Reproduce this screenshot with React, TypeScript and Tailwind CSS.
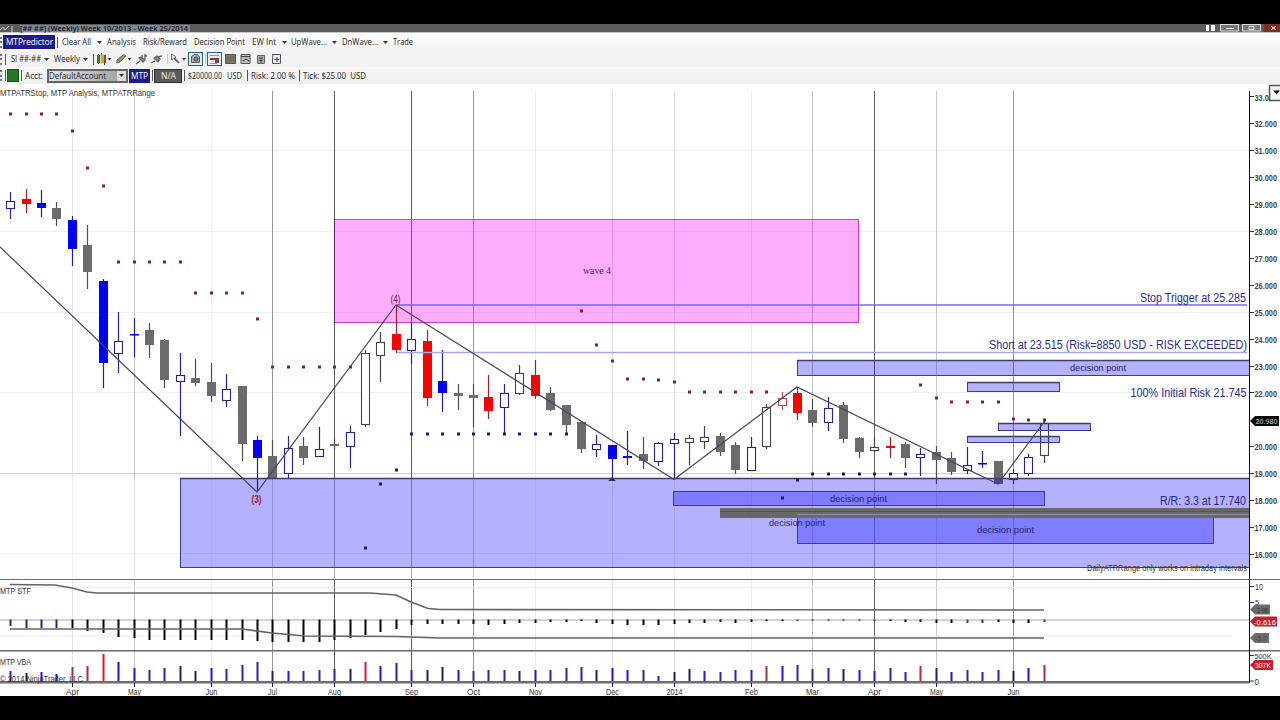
import { ReactNode } from "react";
import clsx from "clsx";

type Kind = "b" | "hb" | "g" | "hk" | "r" | "hr";
// high, body top, body bottom, low, kind
type Candle = [number, number, number, number, Kind];

const STEP = 15.43;
const barX = (i: number) => Math.floor(10.6 + i * STEP) + 0.5;

const candles: Candle[] = [
  [192, 201, 208, 219, "hb"],
  [189, 199, 204, 213, "r"],
  [190, 203, 208, 217, "b"],
  [202, 208, 219, 226, "g"],
  [216, 220, 249, 266, "b"],
  [225, 245, 272, 289, "g"],
  [279, 281, 363, 388, "b"],
  [312, 341, 353, 373, "hb"],
  [318, 334, 335, 357, "b"],
  [323, 330, 345, 358, "g"],
  [339, 340, 380, 388, "g"],
  [353, 375, 381, 436, "hb"],
  [359, 378, 383, 386, "g"],
  [363, 382, 396, 402, "g"],
  [374, 389, 400, 407, "hb"],
  [386, 386, 444, 461, "g"],
  [436, 440, 458, 491, "b"],
  [440, 456, 478, 478, "g"],
  [436, 448, 473, 479, "hb"],
  [437, 446, 458, 465, "g"],
  [427, 449, 456, 456, "hb"],
  [437, 444, 446, 450, "g"],
  [426, 432, 446, 468, "hb"],
  [350, 353, 424, 427, "hk"],
  [332, 342, 355, 382, "hk"],
  [305, 334, 350, 353, "r"],
  [322, 339, 350, 364, "hb"],
  [330, 341, 398, 406, "r"],
  [350, 381, 393, 412, "b"],
  [384, 393, 396, 410, "g"],
  [384, 395, 398, 427, "g"],
  [375, 397, 411, 419, "r"],
  [384, 393, 407, 433, "hb"],
  [365, 373, 393, 395, "hk"],
  [360, 375, 396, 399, "r"],
  [387, 393, 410, 411, "g"],
  [405, 405, 425, 433, "g"],
  [421, 422, 449, 453, "g"],
  [435, 444, 449, 457, "hb"],
  [445, 445, 459, 480, "b"],
  [431, 456, 458, 465, "b"],
  [437, 454, 461, 469, "g"],
  [442, 443, 461, 466, "hb"],
  [433, 439, 443, 479, "hb"],
  [435, 438, 442, 465, "hk"],
  [426, 437, 441, 449, "hk"],
  [433, 436, 452, 456, "g"],
  [442, 445, 470, 474, "g"],
  [437, 447, 470, 470, "hb"],
  [404, 407, 446, 449, "hk"],
  [392, 398, 405, 410, "hr"],
  [387, 393, 413, 420, "r"],
  [399, 410, 423, 427, "g"],
  [397, 408, 422, 431, "hb"],
  [402, 405, 439, 443, "g"],
  [437, 438, 452, 458, "g"],
  [437, 447, 450, 453, "hk"],
  [437, 446, 448, 458, "r"],
  [442, 444, 458, 468, "g"],
  [448, 454, 457, 476, "hb"],
  [446, 452, 460, 484, "g"],
  [452, 458, 472, 475, "g"],
  [447, 465, 470, 474, "hb"],
  [451, 463, 464, 468, "b"],
  [461, 461, 484, 484, "g"],
  [469, 473, 479, 484, "hb"],
  [454, 457, 473, 476, "hb"],
  [421, 423, 455, 463, "hk"],
];

const RED = "#8e1c30";
const NAVY = "#1a1a80";

// first bar, last bar, y, colour
const stops: [number, number, number, string][] = [
  [0, 3, 114, RED],
  [4, 4, 131, RED],
  [5, 5, 168, RED],
  [6, 6, 186, RED],
  [7, 11, 262, RED],
  [12, 15, 293, RED],
  [16, 16, 319, RED],
  [17, 22, 367, RED],
  [23, 23, 548, NAVY],
  [24, 24, 484, NAVY],
  [25, 25, 470, NAVY],
  [26, 36, 434, NAVY],
  [37, 37, 311, RED],
  [38, 38, 345, RED],
  [39, 39, 361, RED],
  [40, 41, 379, RED],
  [42, 42, 380, RED],
  [43, 43, 382, RED],
  [44, 49, 392, RED],
  [50, 50, 498, NAVY],
  [51, 51, 480, NAVY],
  [52, 58, 474, NAVY],
  [59, 59, 385, RED],
  [60, 60, 398, RED],
  [61, 64, 402, RED],
  [65, 65, 419, RED],
  [66, 67, 420, RED],
];

const months: [number, string, string][] = [
  [4, "Apr", "#e4e4e4"],
  [8, "May", "#c4c4c4"],
  [13, "Jun", "#ededed"],
  [17, "Jul", "#989898"],
  [21, "Aug", "#5c5c5c"],
  [26, "Sep", "#5c5c5c"],
  [30, "Oct", "#989898"],
  [34, "Nov", "#ebebeb"],
  [39, "Dec", "#dedede"],
  [43, "2014", "#dedede"],
  [48, "Feb", "#ebebeb"],
  [52, "Mar", "#bdbdbd"],
  [56, "Apr", "#606060"],
  [60, "May", "#c8c8c8"],
  [65, "Jun", "#959595"],
];

const stf = [
  626, 628, 628, 628, 628, 631, 633, 637, 638, 640, 640, 640, 640, 640, 640, 640, 641, 642, 642,
  642, 642, 640, 638, 635, 632, 629, 625, 624, 624, 624, 624, 625, 624, 623, 623, 622, 622, 621,
  623, 624, 625, 625, 625, 624, 623, 623, 622, 623, 622, 621, 621, 621, 620, 620, 619, 620, 621,
  621, 622, 622, 623, 623, 623, 623, 622, 623, 623, 622,
];

const volume = [
  671, 673, 672, 674, 667, 666, 654, 662, 668, 670, 668, 666, 671, 668, 669, 665, 662, 671, 671,
  671, 670, 669, 669, 662, 666, 663, 670, 670, 667, 670, 671, 670, 670, 671, 670, 670, 668, 667,
  670, 668, 670, 670, 676, 672, 669, 671, 672, 670, 670, 666, 666, 665, 669, 668, 669, 670, 671,
  668, 672, 666, 668, 672, 670, 672, 670, 671, 668, 665,
];

const volumeColor = (i: number) => {
  if ([6, 23, 59].includes(i)) return "#e3172a";
  if ([4, 5, 49, 67].includes(i)) return "#a3323a";
  return ["#2222c8", "#2a2a8c", "#2412e0", "#20206a"][(i * 7 + (i >> 2)) % 4];
};

const zones = [
  { x: 180, y: 478, w: 1069, h: 89 },
  { x: 797, y: 360, w: 452, h: 15 },
  { x: 967, y: 382, w: 92, h: 9 },
  { x: 998, y: 423, w: 92, h: 7 },
  { x: 967, y: 436, w: 92, h: 6 },
  { x: 673, y: 491, w: 371, h: 14 },
  { x: 797, y: 516, w: 416, h: 27 },
];

const Label = ({
  x,
  y,
  w,
  size = 9,
  fill = "#333",
  weight = 400,
  family = "'Liberation Sans', sans-serif",
  children,
}: {
  x: number;
  y: number;
  w: number;
  size?: number;
  fill?: string;
  weight?: number;
  family?: string;
  children: ReactNode;
}) => (
  <text
    x={x}
    y={y}
    fontSize={size}
    fill={fill}
    fontWeight={weight}
    fontFamily={family}
    textLength={w}
    lengthAdjust="spacingAndGlyphs"
  >
    {children}
  </text>
);

const MonthLines = ({ top, bottom, opacity = 1 }: { top: number; bottom: number; opacity?: number }) => (
  <g opacity={opacity}>
    {months.map(([i, , color]) => (
      <line key={i} x1={barX(i)} x2={barX(i)} y1={top} y2={bottom} stroke={color} />
    ))}
  </g>
);

const CandleBar = ({ index, data }: { index: number; data: Candle }) => {
  const [high, top, bottom, low, kind] = data;
  const x = barX(index);
  const stroke = { b: "#20208e", hb: "#24248e", g: "#4e4e4e", hk: "#444", r: "#a02030", hr: "#b84848" }[kind];
  const fill = { b: "#0000ff", hb: "#fff", g: "#6b6b6b", hk: "#fff", r: "#ff0000", hr: "#fff" }[kind];
  const hollow = kind.startsWith("h");

  return (
    <g>
      <line x1={x} x2={x} y1={high} y2={top} stroke={stroke} strokeWidth={1.2} />
      <line x1={x} x2={x} y1={bottom} y2={low} stroke={stroke} strokeWidth={1.2} />
      {hollow ? (
        <rect
          x={x - 4}
          y={top + 0.5}
          width={8}
          height={bottom - top}
          fill={fill}
          fillOpacity={index === 67 ? 0.3 : 1}
          stroke={stroke}
          strokeWidth={1.1}
        />
      ) : (
        <rect x={x - 4.5} y={top} width={9} height={Math.max(bottom - top, 1.5)} fill={fill} />
      )}
    </g>
  );
};

const PricePanel = () => (
  <svg className="block h-[495px] w-full" viewBox="0 84 1280 495">
    {[151, 232, 313, 393, 474, 554].map((y) => (
      <line key={y} x1={0} x2={1249} y1={y - 0.5} y2={y - 0.5} stroke={y === 474 ? "#cfcfcf" : "#efefef"} />
    ))}
    <MonthLines top={91} bottom={478} />
    <MonthLines top={478} bottom={578} opacity={0.5} />

    <rect x={334.5} y={219.5} width={524} height={103} fill="#ff00ff" fillOpacity={0.32} stroke="#d23cd8" />
    <line x1={334.5} x2={334.5} y1={219} y2={323} stroke="#6b1f6b" />

    {candles.map((c, i) => (
      <CandleBar key={i} index={i} data={c} />
    ))}

    {zones.map(({ x, y, w, h }) => (
      <g key={`${x}-${y}`}>
        <rect x={x + 0.5} y={y + 0.5} width={w} height={h} fill="#0800ff" fillOpacity={0.3} stroke="#3a3a9c" />
        <line x1={x} x2={x + w} y1={y + 0.5} y2={y + 0.5} stroke="#3d3d66" strokeWidth={y === 491 ? 1 : 1.6} />
      </g>
    ))}
    <rect x={720} y={508} width={529} height={10} fill="#686868" />
    <line x1={720} x2={1249} y1={511.5} y2={511.5} stroke="#555" />
    <line x1={797} x2={1249} y1={514.5} y2={514.5} stroke="#9090a0" />

    <line x1={397} x2={1247} y1={305} y2={305} stroke="#6c6ce8" strokeWidth={1.5} />
    <line x1={397} x2={1247} y1={352.5} y2={352.5} stroke="#a6a6ea" strokeWidth={1.6} />

    <polyline
      points="0,247 257,492 396,305 674,479.5 797,387 998,484 1044,422"
      fill="none"
      stroke="#42426e"
      strokeWidth={1.2}
    />
    <path d="M612 477l4 4h-8z" fill="#333355" />

    {stops.flatMap(([from, to, y, color]) =>
      Array.from({ length: to - from + 1 }, (_, n) => (
        <rect key={`${from + n}`} x={barX(from + n) - 1.5} y={y - 1.5} width={3} height={3} fill={color} />
      ))
    )}

    <Label x={0} y={96} w={155}>MTPATRStop, MTP Analysis, MTPATRRange</Label>
    <Label x={390.5} y={302.5} w={10} size={10} fill="#7d1630">(4)</Label>
    <Label x={251.5} y={502.5} w={10} size={10} fill="#9c1c2c" weight={700}>(3)</Label>
    <Label x={583} y={274} w={28} size={9.5} fill="#5c1b62" family="'Liberation Serif', serif">wave 4</Label>
    <Label x={1070} y={371} w={56} size={9.5} fill="#25256c">decision point</Label>
    <Label x={830} y={502} w={57} size={9.5} fill="#20207c">decision point</Label>
    <Label x={769} y={526} w={56} size={9.5} fill="#25256c">decision point</Label>
    <Label x={977} y={532.5} w={57} size={9.5} fill="#20207c">decision point</Label>
    <Label x={1140} y={301.5} w={106} size={12} fill="#2a2a96">Stop Trigger at 25.285</Label>
    <Label x={989} y={349} w={258} size={12} fill="#2a2a96">Short at 23.515 (Risk=8850 USD - RISK EXCEEDED)</Label>
    <Label x={1130.5} y={397} w={116} size={12} fill="#2a2a96">100% Initial Risk 21.745</Label>
    <Label x={1160} y={505} w={86} size={12} fill="#22228c">R/R: 3.3 at 17.740</Label>
    <Label x={1087} y={571} w={160} size={8.5}>DailyATRRange only works on intraday intervals</Label>

    <line x1={1249.5} x2={1249.5} y1={91} y2={579} stroke="#111" />
    {Array.from({ length: 18 }, (_, n) => 33 - n)
      .filter((p) => p !== 21)
      .map((p) => {
        const y = 97.3 + (33 - p) * 26.92;
        return (
          <g key={p}>
            <line x1={1250} x2={1254} y1={Math.round(y) - 0.5} y2={Math.round(y) - 0.5} stroke="#333" />
            <Label x={1254.5} y={y + 3.2} w={22.5} size={8.5} weight={700} fill="#444">{`${p}.000`}</Label>
          </g>
        );
      })}
    <path d="M1250 421l5-5h24v10h-24z" fill="#0a0a0a" />
    <Label x={1255.5} y={424} w={22} size={8} fill="#ccc">20.980</Label>
    <rect x={1269.5} y={85.5} width={14} height={15} fill="#f4f4f4" stroke="#555" strokeWidth={1.5} />
    <path d="M1273 90.5h7l-3.5 4z" fill="#111" />
  </svg>
);

const StfPanel = () => (
  <svg className="block h-[71px] w-full" viewBox="0 579 1280 71">
    <MonthLines top={579} bottom={650} />
    <line x1={0} x2={1249} y1={587.5} y2={587.5} stroke="#eee" />
    <line x1={0} x2={1249} y1={620} y2={620} stroke="#c4c4c4" strokeWidth={1.4} />
    <line x1={0} x2={1232} y1={636} y2={636} stroke="#ececec" />
    <rect x={0} y={578} width={1280} height={2} fill="#6a6a6a" />
    {stf.map((bottom, i) => (
      <rect
        key={i}
        x={barX(i) - 1}
        y={619.5}
        width={2}
        height={Math.max(bottom - 619.5, 1)}
        fill={i < 4 ? "#2a20a0" : [51, 56, 62, 63, 67].includes(i) ? "#7c2730" : "#050505"}
      />
    ))}
    <polyline
      points="10,584.5 55,585 72,588 87,592 97,593 370,593 396,595 411,602 428,608.5 440,609.5 1044,610"
      fill="none"
      stroke="#646464"
      strokeWidth={1.7}
    />
    <polyline
      points="10,629 242,629 272,633 305,636 396,636.5 440,638 1044,638"
      fill="none"
      stroke="#646464"
      strokeWidth={1.7}
    />
    <Label x={0} y={594} w={31}>MTP STF</Label>

    <line x1={1249.5} x2={1249.5} y1={579} y2={650} stroke="#111" />
    <line x1={1250} x2={1254} y1={586.5} y2={586.5} stroke="#333" />
    <line x1={1250} x2={1254} y1={602.5} y2={602.5} stroke="#333" />
    <Label x={1255} y={590} w={8} size={8.5}>10</Label>
    <Label x={1255} y={605} w={4} size={8}>5</Label>
    <path d="M1250 609.5l5-5h15v10h-15z" fill="#6c6c6c" />
    <Label x={1257} y={613} w={11} size={7} fill="#333">2.98</Label>
    <path d="M1250 621.5l5-5h22v10h-22z" fill="#c81e2c" />
    <Label x={1254} y={624.5} w={22} size={8} fill="#fff">-0.616</Label>
    <path d="M1250 638l5-5h14v10h-14z" fill="#6c6c6c" />
    <Label x={1255} y={641} w={12} size={8} fill="#444">-5.7</Label>
  </svg>
);

const VolumePanel = () => (
  <svg className="block h-[46px] w-full" viewBox="0 650 1280 46">
    <MonthLines top={650} bottom={682} />
    <rect x={0} y={649.5} width={1280} height={2} fill="#6a6a6a" />
    <rect x={0} y={681} width={1249} height={2.5} fill="#6f6f6f" />
    {volume.map((top, i) => (
      <g key={i}>
        <rect x={barX(i) - 2} y={top} width={4} height={681 - top} fill="#fff" fillOpacity={0.8} />
        <rect x={barX(i) - 1} y={top} width={2} height={681 - top} fill={volumeColor(i)} />
      </g>
    ))}
    <Label x={0} y={665} w={31}>MTP VBA</Label>
    <Label x={0} y={682} w={83} size={8.5}>© 2014 NinjaTrader, LLC</Label>
    {months.map(([i, name]) => {
      const w = name === "2014" ? 16 : name === "Jul" ? 9 : name === "Jun" ? 12 : 13;
      return (
        <g key={i}>
          <line x1={barX(i)} x2={barX(i)} y1={683} y2={687} stroke="#222" />
          <Label x={barX(i) - w / 2} y={694.5} w={w} size={8.5}>{name}</Label>
        </g>
      );
    })}

    <line x1={1249.5} x2={1249.5} y1={650} y2={683} stroke="#111" />
    <line x1={1250} x2={1254} y1={655.5} y2={655.5} stroke="#333" />
    <line x1={1250} x2={1254} y1={681} y2={681} stroke="#333" />
    <Label x={1254.5} y={658.5} w={17} size={8}>500K</Label>
    <Label x={1254.5} y={684.5} w={4.5} size={8.5}>0</Label>
    <path d="M1250 665l5-5h18v10h-18z" fill="#c81e2c" />
    <Label x={1255} y={668} w={16} size={7.5} fill="#fff">307K</Label>
  </svg>
);

const Caret = () => (
  <svg className="h-[3px] w-[5px] shrink-0" viewBox="0 0 5 3">
    <path d="M0 0h5L2.5 3z" fill="#333" />
  </svg>
);

const Grip = () => (
  <div className="flex h-[11px] w-[3px] shrink-0 flex-col justify-between">
    <span className="h-[2px] w-[2px] bg-[#777]" />
    <span className="h-[2px] w-[2px] bg-[#777]" />
    <span className="h-[2px] w-[2px] bg-[#777]" />
  </div>
);

const Divider = ({ className }: { className?: string }) => (
  <span className={clsx("h-[11px] w-px shrink-0 bg-[#555]", className)} />
);

// stretches every caption to a fixed width so the strip keeps its rhythm
const Caption = ({ w, color = "#222", children }: { w: number; color?: string; children: ReactNode }) => (
  <svg className="h-[14px] shrink-0 overflow-visible" width={w} height={14}>
    <Label x={0} y={10} w={w} size={9} fill={color} weight={500} family="'Open Sans', sans-serif">
      {children}
    </Label>
  </svg>
);

const MenuBar = () => (
  <div className="flex h-[18px] items-center bg-gradient-to-b from-white to-[#f3f3f3]">
    <Grip />
    <div className="flex h-[14px] w-[52px] items-center justify-center bg-[#1c1a8c]">
      <Caption w={47} color="#fff">MTPredictor</Caption>
    </div>
    <Divider className="mr-[4px] ml-[2px]" />
    <Caption w={29}>Clear All</Caption>
    <span className="w-[6px]" />
    <Caret />
    <span className="w-[5px]" />
    <Caption w={29}>Analysis</Caption>
    <span className="w-[7px]" />
    <Caption w={44}>Risk/Reward</Caption>
    <span className="w-[7px]" />
    <Caption w={51}>Decision Point</Caption>
    <span className="w-[7px]" />
    <Caption w={24}>EW Int</Caption>
    <span className="w-[6px]" />
    <Caret />
    <span className="w-[4px]" />
    <Caption w={36}>UpWave...</Caption>
    <span className="w-[5px]" />
    <Caret />
    <span className="w-[5px]" />
    <Caption w={36}>DnWave...</Caption>
    <span className="w-[5px]" />
    <Caret />
    <span className="w-[5px]" />
    <Caption w={20}>Trade</Caption>
  </div>
);

const ToolBar = () => (
  <div className="flex h-[16px] items-center bg-[#f3f3f3]">
    <Grip />
    <Divider className="mr-[5px] ml-[2px]" />
    <Caption w={30}>SI ##-##</Caption>
    <span className="w-[3px]" />
    <Caret />
    <span className="w-[5px]" />
    <Caption w={26}>Weekly</Caption>
    <span className="w-[3px]" />
    <Caret />
    <Divider className="ml-[5px]" />
    <svg className="h-[16px] w-[190px]" viewBox="93 51 190 16">
      {/* bar style */}
      <path d="M97.5 54v10M100.5 53v10M103.5 55v10" stroke="#444" />
      <path d="M96 55h3v8h-3z" fill="#3d7c2a" />
      <path d="M99.5 54h2.500v9h-2.500z" fill="#a6b650" />
      <path d="M102.500 55h2.500v8h-2.500z" fill="#a93a30" />
      <path d="M106.500 58h4l-2 2.500z" fill="#333" />
      {/* pencil */}
      <path d="M115.500 63l1-3.500 6-5 2.500 1.500-6 6z" fill="#8f9850" stroke="#555" strokeWidth={0.8} />
      <path d="M126.500 58h4l-2 2.500z" fill="#333" />
      {/* indicator and strategy plugs */}
      <path d="M135 64l4-3M138 58l4 4 2-2-4-3zM141 55v4M143 56h3M144 54v5" stroke="#666" strokeWidth={1.3} fill="#888" />
      <path d="M150 63l4-2M153 58l4 4 2-3-3-3zM157 57l4-1" stroke="#666" strokeWidth={1.3} fill="#888" />
      <path d="M166.500 54v10" stroke="#ccc" />
      {/* magnifier */}
      <path d="M170.500 54v6l2-1.500 2 0v-2z" fill="#eee" stroke="#666" />
      <path d="M173.500 58.500l4.500 4.500" stroke="#555" strokeWidth={1.7} />
      <path d="M181 58h4l-2 2.500z" fill="#333" />
      {/* chart trader */}
      <rect x={187.500} y={52.500} width={14} height={13} fill="#dcebf2" stroke="#2a6078" />
      <path d="M190.500 62.500v-6l3-2h3l2 2.500v5.500z" fill="#b0b0b0" stroke="#555" />
      <circle cx={195} cy={59} r={2} fill="#888" stroke="#444" />
      <path d="M204.500 54v10" stroke="#bbb" />
      {/* data box */}
      <rect x={206.500} y={52.500} width={14} height={13} fill="#e4eef3" stroke="#2a6078" />
      <path d="M209 55.500h9M209 63.500h7" stroke="#999" />
      <path d="M209 58h5v2h-5z" fill="#a83232" />
      <path d="M214 58h4v5h-4z" fill="#8a4232" />
      <path d="M224.500 54.500h10v9h-10z" fill="#6f7c62" stroke="#555" />
      <path d="M227 62v-5M230 61v-5M232.500 62v-6" stroke="#a44" />
      <path d="M240 54.500h9v9h-9z" fill="#bbb" stroke="#555" />
      <path d="M240 56.500h9M242 61l3-2 3 2" stroke="#444" fill="none" />
      <path d="M256.500 55.500h7v8h-7z" fill="#aaa" stroke="#666" />
      <path d="M258 58h4M258.500 60.500h3M260 58v5" stroke="#444" />
      <path d="M272.500 54.500h7v9h-8v-7z" fill="#eee" stroke="#556" />
      <path d="M271 54.500h6M273.500 59.500h5M276 57v5" stroke="#446" />
    </svg>
  </div>
);

const AccountBar = () => (
  <div className="flex h-[17px] items-center bg-gradient-to-b from-[#f7f7f7] to-[#efefef]">
    <Grip />
    <Divider className="ml-[2px]" />
    <span className="ml-[1px] h-[13px] w-[12px] border border-[#1c4f1c] bg-[#237a23]" />
    <Divider className="mr-px ml-[2px]" />
    <span className="w-[2px]" />
    <Caption w={18}>Acct:</Caption>
    <div className="ml-[4px] flex h-[14px] w-[81px] items-center justify-between border-2 border-[#666] bg-gradient-to-r from-[#e8e8e8] to-[#9c9c9c]">
      <Caption w={57}>DefaultAccount</Caption>
      <span className="flex h-[10px] w-[9px] items-center justify-center bg-[#ddd]">
        <Caret />
      </span>
    </div>
    <div className="ml-[1px] flex h-[14px] w-[21px] items-center justify-center bg-[#1c1a8c]">
      <Caption w={17} color="#fff">MTP</Caption>
    </div>
    <Divider className="mr-px ml-[2px]" />
    <div className="flex h-[14px] w-[28px] items-center justify-center border border-[#333] bg-[#5a5a5a]">
      <Caption w={15} color="#eee">N/A</Caption>
    </div>
    <Divider className="mr-[3px] ml-[2px]" />
    <Caption w={34}>$20000.00</Caption>
    <span className="w-[5px]" />
    <Caption w={15}>USD</Caption>
    <Divider className="mr-[3px] ml-[5px]" />
    <Caption w={44}>Risk: 2.00 %</Caption>
    <Divider className="mr-[3px] ml-[4px]" />
    <Caption w={63}>Tick: $25.00&nbsp; USD</Caption>
  </div>
);

const TitleBar = () => (
  <div className="flex h-[9px] items-start justify-between border-b border-[#c8c8c8] bg-[#5a5a5a]">
    <svg className="h-[8px] w-[200px] overflow-visible" viewBox="0 24 200 8">
      <path d="M0 30l3-3 2 3 4-4M12 26v6" stroke="#ccc" fill="none" />
      <rect x={20} y={25} width={170} height={7} fill="#9aa6b8" fillOpacity={0.6} />
      <Label x={20} y={30.5} w={168} size={7.5} fill="#11151f" weight={600} family="'Open Sans', sans-serif">
        [## ##] (Weekly)  Week 10/2013 - Week 25/2014
      </Label>
    </svg>
    <svg className="h-[8px] w-[80px]" viewBox="1200 24 80 8">
      <path d="M1206 25h3v6h-3zM1211 25h4v6h-4z" fill="#eee" />
      <rect x={1220.500} y={24.500} width={18} height={6.500} fill="#777" stroke="#ddd" />
      <path d="M1226 28.500h8" stroke="#eee" />
      <rect x={1242.500} y={24.500} width={18} height={6.500} fill="#777" stroke="#ddd" />
      <path d="M1249 26.500h5v3h-5z" fill="none" stroke="#eee" />
      <rect x={1264} y={24} width={16} height={8} fill="#7a3028" />
      <path d="M1271 26l5 4M1276 26l-5 4" stroke="#fff" />
    </svg>
  </div>
);

const App = () => {
  return (
    <div className="flex h-[720px] w-[1280px] flex-col overflow-hidden bg-black py-6">
      <TitleBar />
      <MenuBar />
      <ToolBar />
      <AccountBar />
      <main className="flex flex-1 flex-col bg-white">
        <PricePanel />
        <StfPanel />
        <VolumePanel />
      </main>
    </div>
  );
};

export default App;
